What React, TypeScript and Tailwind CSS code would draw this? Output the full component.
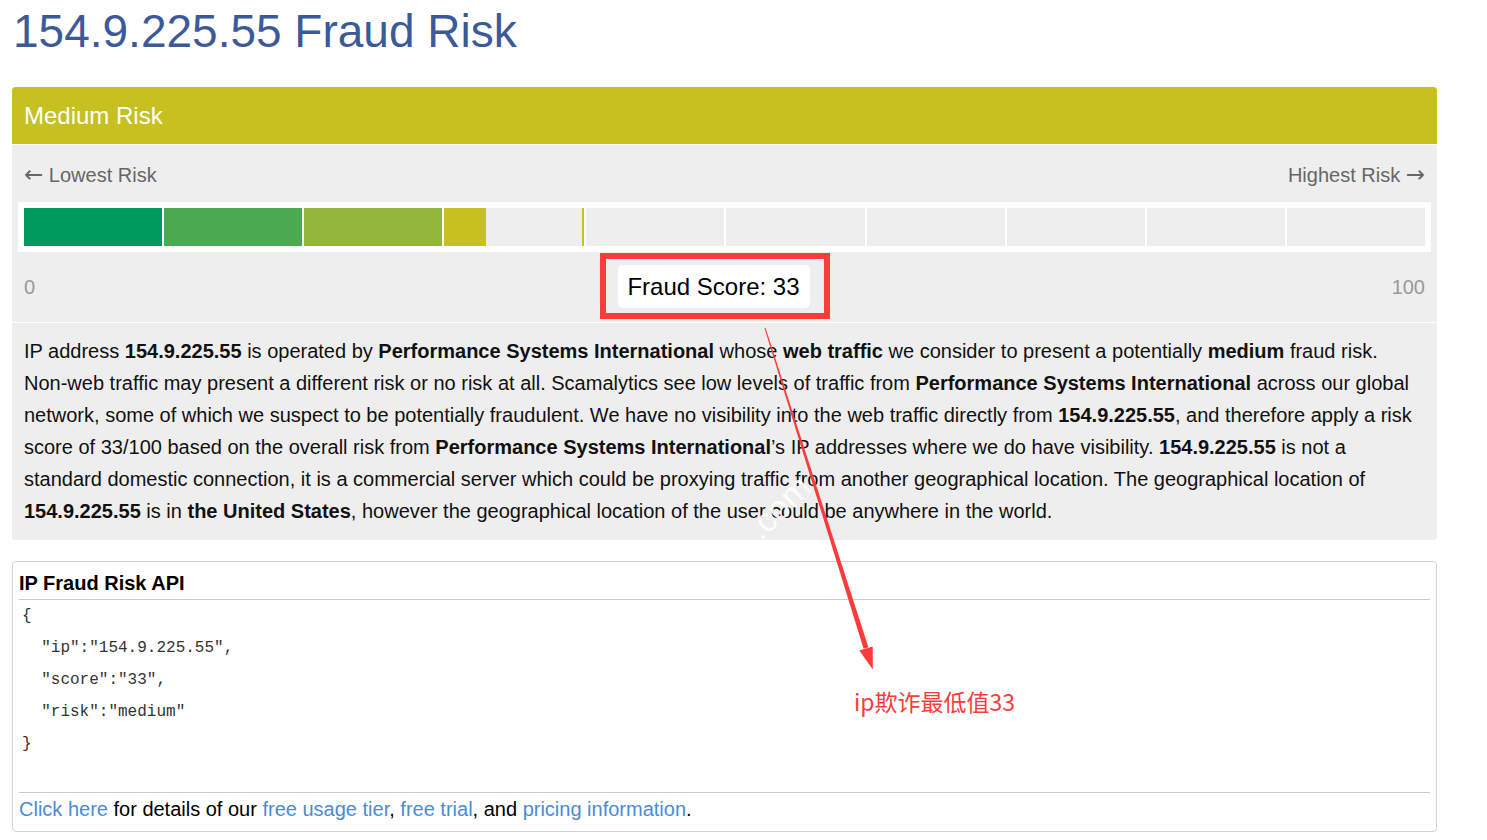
import React from "react";

const SEGMENTS = ["#009a5f", "#4ba94f", "#93b73b"];

const Bar = () => {
  // 10 blocks, score 33 -> first 3 full, 4th partly filled
  return (
    <div className="flex gap-[2px] bg-white p-[6px]">
      {Array.from({ length: 10 }).map((_, i) => {
        if (i < 3) {
          return <div key={i} className="h-[38px] flex-1" style={{ backgroundColor: SEGMENTS[i] }} />;
        }
        if (i === 3) {
          return (
            <div key={i} className="flex h-[38px] flex-1 border-r-2 border-[#c6c021] bg-[#eeeeee]">
              <div className="h-full w-[30%] bg-[#c6c021]" />
            </div>
          );
        }
        return <div key={i} className="h-[38px] flex-1 bg-[#eeeeee]" />;
      })}
    </div>
  );
};

export default function App() {
  return (
    <div className="relative min-h-[840px] w-[1487px] overflow-hidden bg-white pl-[12px] font-['Liberation_Sans',Arial,sans-serif]">
      <h1 className="pt-[7px] pl-[1px] text-[46px] leading-[48px] text-[#3c5a9a]">154.9.225.55 Fraud Risk</h1>

      {/* risk card */}
      <div className="mt-[32px] w-[1425px] overflow-hidden rounded-[4px] bg-[#eeeeee]">
        <div className="flex h-[58px] items-center border-b border-white bg-[#c6c021] px-[12px] text-[24px] text-white">
          Medium Risk
        </div>

        <div className="border-b border-white px-[6px]">
          <div className="mt-[16px] flex h-[28px] items-center justify-between px-[6px] text-[20px] text-[#666]">
            <span>
              <span className="font-['DejaVu_Sans',sans-serif] text-[23px] leading-none">←</span> Lowest Risk
            </span>
            <span>
              Highest Risk <span className="font-['DejaVu_Sans',sans-serif] text-[23px] leading-none">→</span>
            </span>
          </div>
          <div className="mt-[13px]">
            <Bar />
          </div>
          <div className="flex items-center px-[6px] pt-[13px] pb-[14px] text-[20px] text-[#999]">
            <span className="flex-1">0</span>
            <div className="relative mr-[22px] flex h-[43px] w-[192px] items-center justify-center rounded-[5px] bg-white text-[24px] text-black">
              Fraud Score: 33
              <div className="absolute -top-[12px] -bottom-[11px] -left-[18px] -right-[20px] border-[6px] border-[#fd3b3b]" />
            </div>
            <span className="flex-1 text-right">100</span>
          </div>
        </div>

        <p className="px-[12px] pt-[12px] pb-[13px] text-[20px] leading-[32px] text-[#111]">
          IP address <b>154.9.225.55</b> is operated by <b>Performance Systems International</b> whose{" "}
          <b>web traffic</b> we consider to present a potentially <b>medium</b> fraud risk. Non-web traffic may
          present a different risk or no risk at all. Scamalytics see low levels of traffic from{" "}
          <b>Performance Systems International</b> across our global network, some of which we suspect to be
          potentially fraudulent. We have no visibility into the web traffic directly from <b>154.9.225.55</b>, and
          therefore apply a risk score of 33/100 based on the overall risk from{" "}
          <b>Performance Systems International</b>’s IP addresses where we do have visibility.{" "}
          <b>154.9.225.55</b> is not a standard domestic connection, it is a commercial server which could be
          proxying traffic from another geographical location. The geographical location of{" "}
          <b>154.9.225.55</b> is in <b>the United States</b>, however the geographical location of the user could
          be anywhere in the world.
        </p>
      </div>

      {/* api box */}
      <div className="mt-[21px] w-[1425px] rounded-[4px] border border-[#d4d4d4] px-[6px] pt-[5px] pb-[6px]">
        <div className="border-b border-[#cccccc] text-[20px] leading-[32px] font-bold text-black">IP Fraud Risk API</div>
        <pre className="pb-[32px] pl-[3px] font-['Liberation_Mono',monospace] text-[16px] leading-[32px] text-[#333]">
{`{
  "ip":"154.9.225.55",
  "score":"33",
  "risk":"medium"
}`}
        </pre>
        <div className="border-t border-[#cccccc] text-[20px] leading-[32px] text-black">
          <a className="text-[#4b8bd6]">Click here</a> for details of our{" "}
          <a className="text-[#4b8bd6]">free usage tier</a>, <a className="text-[#4b8bd6]">free trial</a>, and{" "}
          <a className="text-[#4b8bd6]">pricing information</a>.
        </div>
      </div>

      {/* watermark */}
      <span className="pointer-events-none absolute left-[742px] top-[482px] -rotate-[45deg] text-[34px] text-white opacity-90">
        .com
      </span>

      {/* annotation arrow */}
      <svg className="pointer-events-none absolute left-0 top-0" width="1487" height="840" viewBox="0 0 1487 840">
        <polygon points="764.5,328.2 765.5,327.8 868.4,647.2 863.6,648.8" fill="#fd3b3b" />
        <polygon points="859.3,650.6 872.7,646.4 872.8,669.5" fill="#fd3b3b" />
      </svg>
      <span className="pointer-events-none absolute left-[854px] top-[685px] font-['Noto_Sans_CJK_SC',sans-serif] text-[23px] leading-[32px] text-[#fd3b3b]">
        ip欺诈最低值33
      </span>
    </div>
  );
}
